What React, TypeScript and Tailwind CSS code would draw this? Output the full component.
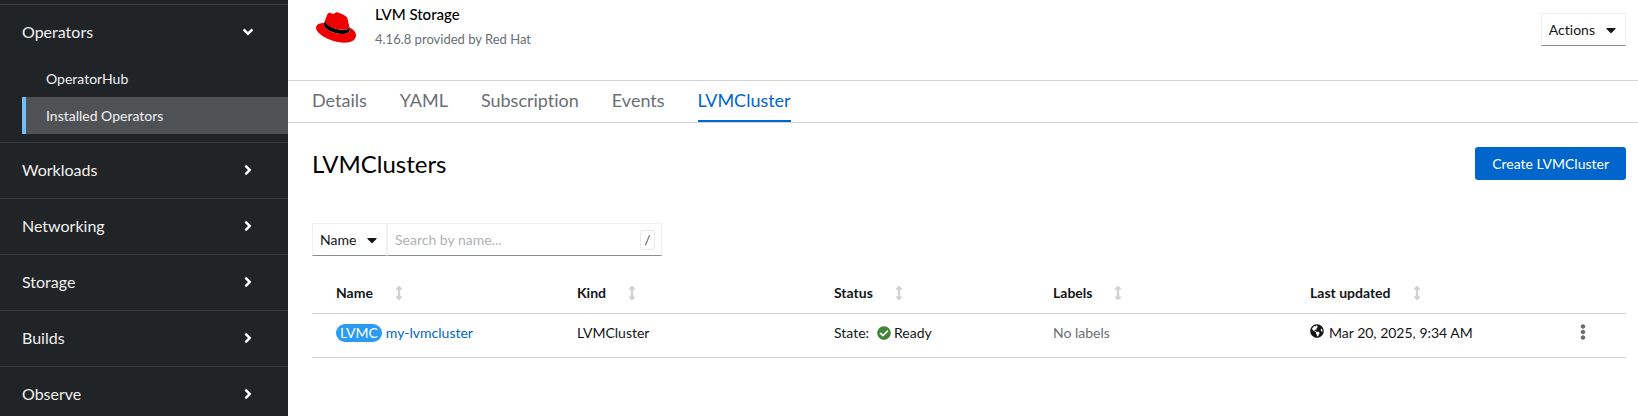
import React from "react";
import {
  FaAngleDown,
  FaAngleRight,
  FaCaretDown,
  FaCheckCircle,
  FaEllipsisV,
  FaGlobeAmericas,
} from "react-icons/fa";

const collapsedSections = ["Workloads", "Networking", "Storage", "Builds", "Observe"];
const tabs = ["Details", "YAML", "Subscription", "Events", "LVMCluster"];
const columns = ["Name", "Kind", "Status", "Labels", "Last updated"];

function FedoraLogo() {
  return (
    <svg viewBox="0 50 512 412" className="h-[33px] w-10" aria-hidden="true">
      <path
        fill="#000"
        d="M429 254.840C433.650 276.840 433.650 279.190 433.650 282.090C433.650 319.750 391.310 340.650 335.650 340.650C209.910 340.730 99.740 267 99.740 218.320A49.550 49.550 0 0 1 103.800 198.600L123.480 149.950C120 158 119.500 176 119.500 179.450C119.500 204.250 210.690 285.560 341.520 285.560C375.170 285.560 423.860 278.620 423.860 238.560Z"
      />
      <path
        fill="#e00"
        d="M341.520 285.560C375.170 285.560 423.860 278.620 423.860 238.560C424.080 231.820 424.720 236.740 402.980 142.320C398.360 123.170 394.300 114.480 360.670 97.670C334.580 84.330 277.750 62.300 260.940 62.300C245.280 62.300 240.740 82.470 222.070 82.470C204.070 82.470 190.760 67.410 173.950 67.410C157.810 67.410 147.290 78.410 139.170 101.030C111.670 178.580 112.890 175.300 113.050 179.300C113.050 204.100 210.690 285.560 341.520 285.560M429 254.840C433.650 276.840 433.650 279.190 433.650 282.090C433.650 319.750 391.320 340.650 335.650 340.650C209.910 340.730 99.740 267 99.740 218.320A49.550 49.550 0 0 1 103.800 198.600C58.560 200.860 0 208.930 0 260.630C0 345.300 200.630 449.630 359.490 449.630C481.280 449.630 512 394.550 512 350.910C512 316.700 482.410 277.850 429 254.840"
      />
    </svg>
  );
}

function SortIcon() {
  return (
    <svg viewBox="0 0 16 16" className="size-4 text-[#d2d2d2]" fill="currentColor" aria-hidden="true">
      <path d="M8 .8a.8.8 0 0 1 .6.25l2.300 2.500c.45.5.1 1.250-.55 1.250H9.200v6.400h1.150c.65 0 1 .75.55 1.250l-2.300 2.500a.8.8 0 0 1-1.200 0l-2.300-2.500c-.45-.5-.1-1.250.55-1.250H6.800V4.800H5.650c-.65 0-1-.75-.55-1.250l2.300-2.500A.8.8 0 0 1 8 .8Z" />
    </svg>
  );
}

function Sidebar() {
  return (
    <nav
      aria-label="Main"
      className="h-screen w-72 shrink-0 overflow-hidden bg-[#212427] pt-1 text-[#f0f0f0]"
    >
      <section className="border-t border-[#3c3f42] pb-2">
        <button
          type="button"
          aria-expanded="true"
          className="flex h-14 w-full items-center justify-between pr-8 pb-0.5 pl-[22px] text-base"
        >
          Operators
          <FaAngleDown className="size-4 text-white" />
        </button>
        <ul className="pl-[22px] text-sm">
          <li>
            <a href="#operatorhub" className="flex h-9 items-center pl-6">
              OperatorHub
            </a>
          </li>
          <li>
            <a
              href="#installed"
              aria-current="page"
              className="flex h-[37px] items-center border-l-4 border-[#73bcf7] bg-[#4f5255] pl-5"
            >
              Installed Operators
            </a>
          </li>
        </ul>
      </section>
      {collapsedSections.map((label) => (
        <section key={label} className="border-t border-[#3c3f42]">
          <button
            type="button"
            aria-expanded="false"
            className="flex h-[55px] w-full items-center justify-between pr-8 pb-0.5 pl-[22px] text-base"
          >
            {label}
            <FaAngleRight className="size-4 text-white" />
          </button>
        </section>
      ))}
    </nav>
  );
}

function OperatorHeader() {
  return (
    <header className="flex h-20 items-start justify-between pr-3 pl-6">
      <div className="flex gap-[19px]">
        <div className="pt-[11px] pl-1">
          <FedoraLogo />
        </div>
        <div className="flex flex-col gap-1 pt-[3px]">
          <h1 className="text-[15px] leading-[22px] font-medium text-black">LVM Storage</h1>
          <p className="text-[13px] leading-5 text-[#6a6e73]">4.16.8 provided by Red Hat</p>
        </div>
      </div>
      <button
        type="button"
        className="mt-[13px] flex h-[33px] items-center gap-2 border border-[#f0f0f0] border-b-[#8a8d90] pr-1.5 pl-[7px] text-sm"
      >
        Actions
        <FaCaretDown className="size-4" />
      </button>
    </header>
  );
}

function Tabs() {
  return (
    <nav
      aria-label="Operator views"
      className="flex gap-[33px] border-y border-[#d2d2d2] px-6 text-lg leading-[39px]"
    >
      {tabs.map((tab) => (
        <a
          key={tab}
          href={`#${tab.toLowerCase()}`}
          className={
            tab === "LVMCluster"
              ? "border-b-2 border-[#06c] text-[#06c]"
              : "border-b-2 border-transparent text-[#6a6e73]"
          }
        >
          {tab}
        </a>
      ))}
    </nav>
  );
}

function Toolbar() {
  return (
    <div className="flex h-[33px] w-[350px] text-sm">
      <button
        type="button"
        className="flex w-[75px] items-center justify-between border border-[#f0f0f0] border-b-[#8a8d90] pr-1.5 pl-[7px]"
      >
        Name
        <FaCaretDown className="size-4" />
      </button>
      <div className="flex flex-1 items-center border border-[#f0f0f0] border-b-[#8a8d90] pr-1.5 pl-[7px]">
        <input
          type="text"
          aria-label="Search by name"
          placeholder="Search by name..."
          className="min-w-0 flex-1 outline-none placeholder:text-[#b0b2b5]"
        />
        <kbd className="flex h-5 w-[15px] items-center justify-center rounded-[3px] border border-[#e8e8e8] font-[Lato,sans-serif] text-sm text-[#4f5255]">
          /
        </kbd>
      </div>
    </div>
  );
}

function ClusterTable() {
  return (
    <table className="w-full table-fixed text-left text-sm">
      <colgroup>
        <col className="w-[241px]" />
        <col className="w-[257px]" />
        <col className="w-[219px]" />
        <col className="w-[257px]" />
        <col className="w-[268px]" />
        <col className="w-[72px]" />
      </colgroup>
      <thead>
        <tr className="h-[39px] border-b border-[#d2d2d2]">
          {columns.map((column) => (
            <th key={column} scope="col" className="pl-6 font-bold">
              <button type="button" className="flex items-center gap-[18px]">
                {column}
                <SortIcon />
              </button>
            </th>
          ))}
          <td />
        </tr>
      </thead>
      <tbody>
        <tr className="h-11 border-b border-[#d2d2d2] align-top">
          <td className="pt-2.5 pl-6">
            <span className="flex items-center gap-1">
              <span className="rounded-full bg-[#2b9af3] px-1 leading-[18px] text-white">LVMC</span>
              <a href="#my-lvmcluster" className="leading-[18px] text-[#06c]">
                my-lvmcluster
              </a>
            </span>
          </td>
          <td className="pt-2.5 pl-6 leading-[18px]">LVMCluster</td>
          <td className="pt-2.5 pl-6 leading-[18px]">
            <span className="flex items-center">
              State:
              <FaCheckCircle className="mr-[3px] ml-2 size-3.5 text-[#3e8635]" />
              Ready
            </span>
          </td>
          <td className="pt-2.5 pl-6 leading-[18px] text-[#6a6e73]">No labels</td>
          <td className="pt-2.5 pl-6 leading-[18px]">
            <span className="flex items-start gap-[5px]">
              <FaGlobeAmericas className="size-3.5" />
              Mar 20, 2025, 9:34 AM
            </span>
          </td>
          <td className="pt-2.5 pl-[17px]">
            <button type="button" aria-label="Row actions" className="block px-1 text-[#6a6e73]">
              <FaEllipsisV className="size-4" />
            </button>
          </td>
        </tr>
      </tbody>
    </table>
  );
}

export default function App() {
  return (
    <div className="flex h-screen overflow-hidden bg-white font-[Lato,sans-serif] text-[#151515] [font-variant-ligatures:none]">
      <Sidebar />
      <main className="min-w-0 flex-1">
        <OperatorHeader />
        <Tabs />
        <div className="pt-6 pr-3 pl-6">
          <div className="mb-[43px] flex items-center justify-between">
            <h2 className="text-2xl leading-[33px] text-black">LVMClusters</h2>
            <button type="button" className="h-[33px] rounded-[3px] bg-[#06c] px-[17px] text-sm text-white">
              Create LVMCluster
            </button>
          </div>
          <Toolbar />
          <div className="pt-[18px]">
            <ClusterTable />
          </div>
        </div>
      </main>
    </div>
  );
}
